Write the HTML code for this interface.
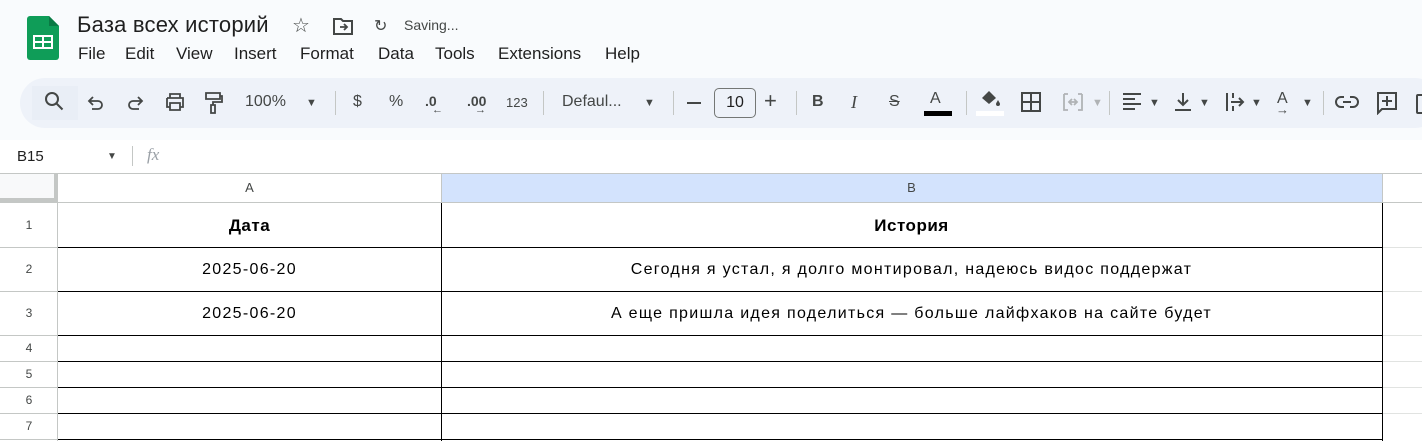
<!DOCTYPE html>
<html><head><meta charset="utf-8"><style>
*{margin:0;padding:0;box-sizing:border-box}
body{width:1422px;height:441px;overflow:hidden;background:#f9fbfd;font-family:"Liberation Sans",Arial,sans-serif;position:relative;color:#1f1f1f}
.a{position:absolute}
.tb{position:absolute;left:20px;top:78px;width:1420px;height:50px;background:#eef2f9;border-radius:25px}
.ic{position:absolute;top:91px}
.t{position:absolute;top:93px;font-size:16px;color:#444746}
.sep{position:absolute;top:91px;width:1px;height:24px;background:#c4c7c5}
.hl{position:absolute;left:58px;width:1325px;height:1px;background:#000}
.rh{position:absolute;left:0;width:58px;text-align:center;font-size:12px;color:#444746}
.rl{position:absolute;left:0;width:58px;height:1px;background:#c4c7c5}
</style></head><body>
<svg class="a" style="left:27px;top:16px" width="32" height="44" viewBox="0 0 32 44"><path d="M3 0h19l10 10v31a3 3 0 0 1-3 3H3a3 3 0 0 1-3-3V3a3 3 0 0 1 3-3z" fill="#0f9d58"/><path d="M22 0l10 10H22z" fill="#0a7a44"/><rect x="6" y="19" width="20" height="14" fill="#fff"/><rect x="8" y="21" width="7" height="4" fill="#0f9d58"/><rect x="17" y="21" width="7" height="4" fill="#0f9d58"/><rect x="8" y="27" width="7" height="4" fill="#0f9d58"/><rect x="17" y="27" width="7" height="4" fill="#0f9d58"/></svg>
<div class="a" style="left:77px;top:12px;font-size:22px;letter-spacing:0.2px">База всех историй</div>
<div class="a" style="left:292px;top:13px;font-size:20px;color:#444746">☆</div>
<svg class="a" style="left:333px;top:17px" width="20" height="18" viewBox="0 0 20 18"><path d="M1 2h7l2 2h9v13H1z" fill="none" stroke="#444746" stroke-width="2"/><path d="M7 10h7M11 7l3 3-3 3" fill="none" stroke="#444746" stroke-width="1.8"/></svg>
<div class="a" style="left:374px;top:16px;font-size:16px;color:#444746">↻</div>
<div class="a" style="left:404px;top:17px;font-size:14px;color:#444746">Saving...</div>
<div class="a" style="left:78px;top:44px;font-size:17px">
<span class="a" style="left:0">File</span><span class="a" style="left:47px">Edit</span><span class="a" style="left:98px">View</span><span class="a" style="left:156px">Insert</span><span class="a" style="left:222px">Format</span><span class="a" style="left:300px">Data</span><span class="a" style="left:357px">Tools</span><span class="a" style="left:420px">Extensions</span><span class="a" style="left:527px">Help</span></div>
<div class="tb"></div>
<div class="a" style="left:32px;top:86px;width:46px;height:34px;background:#e9eef6"></div>
<svg class="ic" style="left:44px" width="22" height="22" viewBox="0 0 22 22"><circle cx="8" cy="8" r="6" fill="none" stroke="#444746" stroke-width="2"/><path d="M12.5 12.5l6 6" stroke="#444746" stroke-width="2"/></svg>
<svg class="ic" style="left:86px" width="20" height="22" viewBox="0 0 20 22"><path d="M7 6L3 10l4 4M3 10h9a4 4 0 0 1 0 8H6" fill="none" stroke="#444746" stroke-width="1.8"/></svg>
<svg class="ic" style="left:125px" width="20" height="22" viewBox="0 0 20 22"><path d="M13 6l4 4-4 4M17 10H8a4 4 0 0 0 0 8h6" fill="none" stroke="#444746" stroke-width="1.8"/></svg>
<svg class="ic" style="left:164px" width="22" height="22" viewBox="0 0 22 22"><path d="M6 7V3h10v4M3 7h16v9h-3M6 16H3V7M6 12h10v7H6z" fill="none" stroke="#444746" stroke-width="1.8"/></svg>
<svg class="ic" style="left:203px" width="22" height="24" viewBox="0 0 22 24"><path d="M3 2h14v6H3zM17 5h2v6h-9v3M8 14h4v8H8z" fill="none" stroke="#444746" stroke-width="1.8"/></svg>
<div class="t" style="left:245px">100%</div><div class="t" style="left:306px;font-size:11px;top:97px">▼</div>
<div class="sep" style="left:335px"></div>
<div class="t" style="left:353px">$</div><div class="t" style="left:389px">%</div>
<div class="t" style="left:425px;font-size:14px;font-weight:bold">.0</div><div class="t" style="left:432px;top:104px;font-size:11px">←</div>
<div class="t" style="left:467px;font-size:14px;font-weight:bold">.00</div><div class="t" style="left:475px;top:104px;font-size:11px">→</div>
<div class="t" style="left:506px;font-size:13px;top:95px">123</div>
<div class="sep" style="left:543px"></div>
<div class="t" style="left:562px">Defaul...</div><div class="t" style="left:644px;font-size:11px;top:97px">▼</div>
<div class="sep" style="left:673px"></div>
<div class="a" style="left:687px;top:102px;width:14px;height:2px;background:#444746"></div>
<div class="a" style="left:714px;top:88px;width:42px;height:30px;border:1px solid #747775;border-radius:5px;text-align:center;font-size:16px;line-height:28px;color:#1f1f1f">10</div>
<div class="t" style="left:764px;font-size:22px;top:88px">+</div>
<div class="sep" style="left:796px"></div>
<div class="t" style="left:812px;font-weight:bold">B</div>
<div class="t" style="left:851px;font-style:italic;font-family:'Liberation Serif',serif;font-size:18px;top:92px">I</div>
<div class="t" style="left:889px;text-decoration:line-through">S</div>
<div class="t" style="left:930px;font-size:16px;top:90px">A</div><div class="a" style="left:924px;top:111px;width:28px;height:5px;background:#000"></div>
<div class="sep" style="left:966px"></div>
<svg class="ic" style="left:978px;top:89px" width="24" height="20" viewBox="0 0 24 20"><path d="M4 9l7-7 7 7-7 6z" fill="#444746"/><path d="M20 11c-1 2-2 3-2 4a2 2 0 0 0 4 0c0-1-1-2-2-4z" fill="#444746"/></svg>
<div class="a" style="left:976px;top:111px;width:28px;height:5px;background:#fff"></div>
<svg class="ic" style="left:1020px" width="22" height="22" viewBox="0 0 22 22"><path d="M2 2h18v18H2zM11 2v18M2 11h18" fill="none" stroke="#444746" stroke-width="2"/></svg>
<svg class="ic" style="left:1062px" width="22" height="22" viewBox="0 0 22 22"><path d="M2 3h4M2 3v16h4M20 3h-4M20 3v16h-4M8 11h6M10 8l-3 3 3 3M12 8l3 3-3 3" fill="none" stroke="#b0b3b5" stroke-width="1.8"/></svg>
<div class="t" style="left:1092px;font-size:11px;top:97px;color:#b0b3b5">▼</div>
<div class="sep" style="left:1109px"></div>
<svg class="ic" style="left:1121px" width="22" height="22" viewBox="0 0 22 22"><path d="M2 3h18M2 8h12M2 13h18M2 18h12" stroke="#444746" stroke-width="2"/></svg>
<div class="t" style="left:1149px;font-size:11px;top:97px">▼</div>
<svg class="ic" style="left:1172px" width="22" height="22" viewBox="0 0 22 22"><path d="M11 2v12M6 9l5 5 5-5M3 19h16" fill="none" stroke="#444746" stroke-width="2"/></svg>
<div class="t" style="left:1199px;font-size:11px;top:97px">▼</div>
<svg class="ic" style="left:1224px" width="22" height="22" viewBox="0 0 22 22"><path d="M3 2v18M9 2v5M9 15v5M7 11h12M15 7l4 4-4 4" fill="none" stroke="#444746" stroke-width="2"/></svg>
<div class="t" style="left:1251px;font-size:11px;top:97px">▼</div>
<div class="t" style="left:1277px;top:90px">A</div><div class="t" style="left:1276px;top:102px;font-size:13px">→</div>
<div class="t" style="left:1302px;font-size:11px;top:97px">▼</div>
<div class="sep" style="left:1323px"></div>
<svg class="ic" style="left:1335px" width="24" height="22" viewBox="0 0 24 22"><path d="M9 6H6a5 5 0 0 0 0 10h3M15 6h3a5 5 0 0 1 0 10h-3M8 11h8" fill="none" stroke="#444746" stroke-width="2"/></svg>
<svg class="ic" style="left:1376px" width="22" height="24" viewBox="0 0 22 24"><path d="M2 2h18v16H6l-4 4z" fill="none" stroke="#444746" stroke-width="2"/><path d="M11 5v10M6 10h10" stroke="#444746" stroke-width="2"/></svg>
<div class="a" style="left:1416px;top:94px;width:10px;height:20px;border:2px solid #444746;border-radius:2px"></div>
<div class="a" style="left:0;top:140px;width:1422px;height:34px;background:#fff"></div>
<div class="a" style="left:17px;top:148px;font-size:15px;color:#1f1f1f">B15</div>
<div class="a" style="left:107px;top:151px;font-size:10px;color:#444746">▼</div>
<div class="a" style="left:132px;top:146px;width:1px;height:20px;background:#c4c7c5"></div>
<div class="a" style="left:147px;top:145px;font-size:17px;font-style:italic;font-family:'Liberation Serif',serif;color:#9aa0a6">fx</div>
<div class="a" style="left:0;top:173px;width:1422px;height:268px;background:#fff"></div>
<div class="a" style="left:0;top:173px;width:1422px;height:1px;background:#c4c7c5"></div>
<div class="a" style="left:0;top:174px;width:58px;height:29px;background:#f8f9fa;border-right:4px solid #c4c7c5;border-bottom:5px solid #c4c7c5"></div>
<div class="a" style="left:441px;top:174px;width:941px;height:29px;background:#d3e3fd"></div>
<div class="a" style="left:58px;top:202px;width:1364px;height:1px;background:#c4c7c5"></div>
<div class="a" style="left:441px;top:174px;width:1px;height:29px;background:#c4c7c5"></div>
<div class="a" style="left:1382px;top:174px;width:1px;height:29px;background:#c4c7c5"></div>
<div class="a" style="left:58px;top:180px;width:383px;text-align:center;font-size:13px;color:#444746">A</div>
<div class="a" style="left:441px;top:180px;width:941px;text-align:center;font-size:13px;color:#444746">B</div>
<div class="a" style="left:57px;top:203px;width:1px;height:238px;background:#c4c7c5"></div>
<div class="a" style="left:441px;top:203px;width:1px;height:238px;background:#000"></div>
<div class="a" style="left:1382px;top:203px;width:1px;height:238px;background:#000"></div>
<div class="hl" style="top:247px"></div><div class="hl" style="top:291px"></div><div class="hl" style="top:335px"></div><div class="hl" style="top:361px"></div><div class="hl" style="top:387px"></div><div class="hl" style="top:413px"></div><div class="hl" style="top:439px"></div>
<div class="rl" style="top:247px"></div><div class="rl" style="top:291px"></div><div class="rl" style="top:335px"></div><div class="rl" style="top:361px"></div><div class="rl" style="top:387px"></div><div class="rl" style="top:413px"></div><div class="rl" style="top:439px"></div>
<div class="a" style="left:1383px;top:247px;width:39px;height:1px;background:#e1e3e1"></div><div class="a" style="left:1383px;top:291px;width:39px;height:1px;background:#e1e3e1"></div><div class="a" style="left:1383px;top:335px;width:39px;height:1px;background:#e1e3e1"></div><div class="a" style="left:1383px;top:361px;width:39px;height:1px;background:#e1e3e1"></div><div class="a" style="left:1383px;top:387px;width:39px;height:1px;background:#e1e3e1"></div><div class="a" style="left:1383px;top:413px;width:39px;height:1px;background:#e1e3e1"></div>
<div class="rh" style="top:218px">1</div><div class="rh" style="top:262px">2</div><div class="rh" style="top:306px">3</div><div class="rh" style="top:341px">4</div><div class="rh" style="top:367px">5</div><div class="rh" style="top:393px">6</div><div class="rh" style="top:419px">7</div>
<div class="a" style="left:58px;top:216px;width:383px;text-align:center;font-size:17px;font-weight:bold;color:#000;letter-spacing:0.5px">Дата</div>
<div class="a" style="left:441px;top:216px;width:941px;text-align:center;font-size:17px;font-weight:bold;color:#000;letter-spacing:0.5px">История</div>
<div class="a" style="left:58px;top:261px;width:383px;text-align:center;font-size:16px;color:#000;letter-spacing:1.3px">2025-06-20</div>
<div class="a" style="left:58px;top:305px;width:383px;text-align:center;font-size:16px;color:#000;letter-spacing:1.3px">2025-06-20</div>
<div class="a" style="left:441px;top:261px;width:941px;text-align:center;font-size:16px;color:#000;letter-spacing:1.3px">Сегодня я устал, я долго монтировал, надеюсь видос поддержат</div>
<div class="a" style="left:441px;top:305px;width:941px;text-align:center;font-size:16px;color:#000;letter-spacing:1.3px">А еще пришла идея поделиться — больше лайфхаков на сайте будет</div>
</body></html>
